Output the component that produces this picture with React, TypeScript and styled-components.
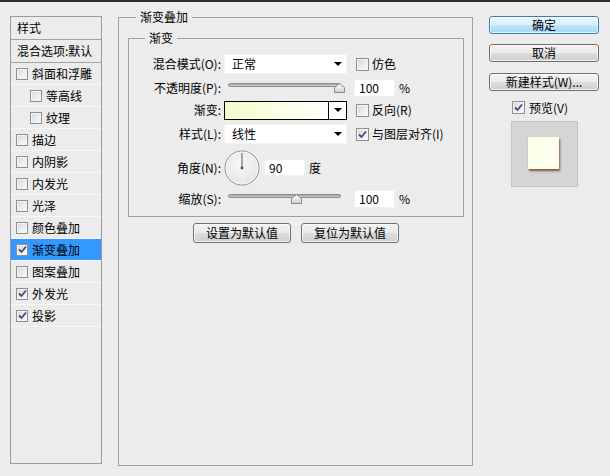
import React from 'react';
import styled, { createGlobalStyle } from 'styled-components';

const GlobalStyle = createGlobalStyle`
  html, body { margin: 0; padding: 0; background: #ececec; }
  body {
    font-family: "Noto Sans CJK SC", "Liberation Sans", sans-serif;
    font-size: 12px;
    color: #000;
  }
  * { box-sizing: border-box; }
`;

const Window = styled.div`
  width: 610px;
  height: 476px;
  background: #ececec;
  display: flex;
  flex-direction: column;
  overflow: hidden;
`;

const TopBar = styled.div`
  height: 2px;
  flex: none;
  background: #2e2e2e;
`;

const Main = styled.div`
  display: flex;
  align-items: flex-start;
  padding-left: 10px;
`;

/* ---------- left list ---------- */
const StyleList = styled.div`
  margin-top: 14px;
  width: 92px;
  height: 448px;
  border: 1px solid #9c9c9c;
  display: flex;
  flex-direction: column;
`;

const ListHeader = styled.div`
  height: 23px;
  flex: none;
  border-bottom: 1px solid #a3a3a3;
  padding-left: 6px;
  display: flex;
  align-items: center;
  white-space: nowrap;
  line-height: 14px;
`;

const ListItem = styled.div<{ $indent?: boolean; $active?: boolean }>`
  height: 22px;
  flex: none;
  border-bottom: 1px solid #f7f7f7;
  display: flex;
  align-items: center;
  gap: 4px;
  padding-left: ${(p) => (p.$indent ? 19 : 5)}px;
  background: ${(p) => (p.$active ? '#3399ff' : 'transparent')};
  white-space: nowrap;
  line-height: 14px;
`;

/* ---------- checkbox ---------- */
const Box = styled.span<{ $size?: number }>`
  width: ${(p) => p.$size ?? 12}px;
  height: ${(p) => p.$size ?? 12}px;
  flex: none;
  border: 1px solid #8e8f8f;
  background: linear-gradient(135deg, #d6d6d6 0%, #ececec 55%, #fbfbfb 100%);
  box-shadow: inset 0 0 0 1px #f4f4f4;
  display: inline-flex;
  align-items: center;
  justify-content: center;
`;

const CheckBox: React.FC<{ checked?: boolean; size?: number }> = ({ checked, size }) => (
  <Box $size={size}>
    {checked && (
      <svg width="9" height="9" viewBox="0 0 9 9">
        <path d="M1 4.5 L3.5 7 L8 1.5" fill="none" stroke="#3b4d85" strokeWidth="1.8" />
      </svg>
    )}
  </Box>
);

/* ---------- group boxes ---------- */
const OuterGroup = styled.fieldset`
  margin: 8px 0 0 16px;
  padding: 0 8px 0 9px;
  width: 355px;
  height: 456px;
  border: 1px solid #a0a0a0;
  min-width: 0;
  display: block;
`;

const Legend = styled.legend<{ $offset: number }>`
  margin-left: ${(p) => p.$offset}px;
  padding: 0 4px;
  line-height: 14px;
  font-size: 12px;
`;

const InnerGroup = styled.fieldset`
  margin: 7px 0 0 0;
  padding: 9px 0 0 0;
  width: 336px;
  height: 186px;
  border: 1px solid #a0a0a0;
  min-width: 0;
  display: block;
`;

const Rows = styled.div`
  display: flex;
  flex-direction: column;
`;

const Row = styled.div<{ $h: number; $mt?: number }>`
  height: ${(p) => p.$h}px;
  margin-top: ${(p) => p.$mt ?? 0}px;
  display: flex;
  align-items: center;
`;

const Label = styled.div`
  width: 92px;
  flex: none;
  text-align: right;
  white-space: nowrap;
  line-height: 14px;
  margin-right: 3px;
`;

const Extra = styled.div`
  margin-left: 7px;
  display: flex;
  align-items: center;
  gap: 4px;
  white-space: nowrap;
  line-height: 14px;
`;

const CheckLabel = styled.label`
  display: flex;
  align-items: center;
  gap: 3px;
  margin-left: 2px;
  white-space: nowrap;
  line-height: 14px;
`;

/* ---------- select ---------- */
const Select = styled.div`
  width: 123px;
  height: 20px;
  background: #fff;
  border: 1px solid #f2f2f2;
  display: flex;
  align-items: center;
  justify-content: space-between;
  padding: 0 4px 0 7px;
  line-height: 14px;
`;

const Arrow = styled.span`
  width: 0;
  height: 0;
  border-left: 4px solid transparent;
  border-right: 4px solid transparent;
  border-top: 4px solid #000;
`;

/* ---------- gradient picker ---------- */
const GradientPicker = styled.div`
  width: 123px;
  height: 19px;
  border: 1px solid #000;
  display: flex;
`;

const GradientFill = styled.div`
  flex: 1;
  background: linear-gradient(to right, #f3fbc9, #fbffe6 55%, #fffffb);
  border-right: 1px solid #000;
`;

const GradientArrow = styled.div`
  width: 17px;
  background: #fff;
  display: flex;
  align-items: center;
  justify-content: center;
`;

/* ---------- slider ---------- */
const SliderWrap = styled.div<{ $mt: number }>`
  width: 123px;
  padding-left: 4px;
  align-self: flex-start;
  margin-top: ${(p) => p.$mt}px;
`;

const Track = styled.div`
  position: relative;
  width: 113px;
  height: 4px;
  border-radius: 2px;
  border: 1px solid #8d8d8d;
  background: linear-gradient(#9c9c9c, #d8d8d8);
`;

const Thumb = styled.svg`
  position: absolute;
  top: -1px;
`;

const Slider: React.FC<{ pos: number; mt: number }> = ({ pos, mt }) => (
  <SliderWrap $mt={mt}>
    <Track>
      <Thumb width="11" height="10" viewBox="0 0 11 10" style={{ left: pos - 5 }}>
        <defs>
          <linearGradient id="tg" x1="0" y1="0" x2="0" y2="1">
            <stop offset="0" stopColor="#fdfdfd" />
            <stop offset="1" stopColor="#d2d2d2" />
          </linearGradient>
        </defs>
        <path d="M0.5 9.5 V4.5 L5.5 0.5 L10.5 4.5 V9.5 Z" fill="url(#tg)" stroke="#8a8a8a" />
      </Thumb>
    </Track>
  </SliderWrap>
);

/* ---------- number input ---------- */
const NumInput = styled.div<{ $w?: number; $h?: number }>`
  width: ${(p) => p.$w ?? 41}px;
  height: ${(p) => p.$h ?? 18}px;
  background: #fff;
  border: 1px solid #f0f0f0;
  padding-left: 4px;
  display: flex;
  align-items: center;
  font-size: 12px;
  line-height: 14px;
`;

/* ---------- angle dial ---------- */
const AngleGroup = styled.div`
  display: flex;
  align-items: center;
  gap: 4px;
  line-height: 14px;
`;

const Dial = () => (
  <svg width="36" height="36" viewBox="0 0 36 36">
    <defs>
      <radialGradient id="dg" cx="0.45" cy="0.4" r="0.7">
        <stop offset="0" stopColor="#f8f8f8" />
        <stop offset="1" stopColor="#e2e2e2" />
      </radialGradient>
    </defs>
    <circle cx="18" cy="18" r="17" fill="url(#dg)" stroke="#8f8f8f" />
    <circle cx="18" cy="18" r="16" fill="none" stroke="#fafafa" strokeWidth="0.8" />
    <line x1="18" y1="3" x2="18" y2="18" stroke="#5a5a5a" strokeWidth="1" />
    <circle cx="18" cy="18" r="1.4" fill="#4a4a4a" />
  </svg>
);

/* ---------- buttons ---------- */
const Button = styled.button<{ $w?: number; $h?: number; $primary?: boolean }>`
  width: ${(p) => p.$w ?? 110}px;
  height: ${(p) => p.$h ?? 18}px;
  padding: 0;
  font-family: inherit;
  font-size: 12px;
  line-height: 14px;
  color: #000;
  border-radius: 3px;
  border: 1px solid ${(p) => (p.$primary ? '#3c7fb1' : '#707070')};
  background: ${(p) =>
    p.$primary
      ? 'linear-gradient(#eaf6fd 0%, #d9f0fc 50%, #bee6fd 51%, #a7d9f5 100%)'
      : 'linear-gradient(#f2f2f2 0%, #ebebeb 50%, #dddddd 51%, #cfcfcf 100%)'};
  box-shadow: inset 0 0 0 1px ${(p) => (p.$primary ? 'rgba(255,255,255,0.6)' : 'rgba(255,255,255,0.7)')};
  white-space: nowrap;
`;

const ButtonBar = styled.div`
  margin-top: 6px;
  display: flex;
  justify-content: center;
  gap: 10px;
`;

/* ---------- right column ---------- */
const RightCol = styled.div`
  margin: 14px 0 0 16px;
  width: 110px;
  display: flex;
  flex-direction: column;
  align-items: center;
`;

const Gap = styled.div<{ $h: number }>`
  height: ${(p) => p.$h}px;
  flex: none;
`;

const PreviewRow = styled.div`
  display: flex;
  align-items: center;
  gap: 4px;
  line-height: 14px;
  height: 13px;
  margin-right: 8px;
`;

const Swatch = styled.div`
  width: 67px;
  height: 66px;
  background: #d5d5d5;
  border: 1px solid #c4c4c4;
  display: flex;
  align-items: center;
  justify-content: center;
`;

const SwatchInner = styled.div`
  width: 31px;
  height: 32px;
  background: linear-gradient(135deg, #fbfde6, #fffff4);
  box-shadow: 1px 2px 2px rgba(120, 62, 30, 0.85);
  margin: -2px 0 0 -2px;
`;

const listItems: { text: string; checked?: boolean; indent?: boolean; active?: boolean }[] = [
  { text: '斜面和浮雕' },
  { text: '等高线', indent: true },
  { text: '纹理', indent: true },
  { text: '描边' },
  { text: '内阴影' },
  { text: '内发光' },
  { text: '光泽' },
  { text: '颜色叠加' },
  { text: '渐变叠加', checked: true, active: true },
  { text: '图案叠加' },
  { text: '外发光', checked: true },
  { text: '投影', checked: true },
];

export default function App() {
  return (
    <Window>
      <GlobalStyle />
      <TopBar />
      <Main>
        <StyleList>
          <ListHeader>样式</ListHeader>
          <ListHeader>混合选项:默认</ListHeader>
          {listItems.map((it) => (
            <ListItem key={it.text} $indent={it.indent} $active={it.active}>
              <CheckBox checked={it.checked} />
              <span>{it.text}</span>
            </ListItem>
          ))}
        </StyleList>

        <OuterGroup>
          <Legend $offset={8}>渐变叠加</Legend>
          <InnerGroup>
            <Legend $offset={16}>渐变</Legend>
            <Rows>
              <Row $h={20}>
                <Label>混合模式(O):</Label>
                <Select>
                  <span>正常</span>
                  <Arrow />
                </Select>
                <Extra>
                  <CheckLabel>
                    <CheckBox size={13} />
                    仿色
                  </CheckLabel>
                </Extra>
              </Row>
              <Row $h={21} $mt={3}>
                <Label>不透明度(P):</Label>
                <Slider pos={110} mt={6} />
                <Extra>
                  <NumInput>100</NumInput>
                  <span>%</span>
                </Extra>
              </Row>
              <Row $h={20} $mt={2}>
                <Label>渐变:</Label>
                <GradientPicker>
                  <GradientFill />
                  <GradientArrow>
                    <Arrow />
                  </GradientArrow>
                </GradientPicker>
                <Extra>
                  <CheckLabel>
                    <CheckBox size={13} />
                    反向(R)
                  </CheckLabel>
                </Extra>
              </Row>
              <Row $h={20} $mt={4}>
                <Label>样式(L):</Label>
                <Select>
                  <span>线性</span>
                  <Arrow />
                </Select>
                <Extra>
                  <CheckLabel>
                    <CheckBox size={13} checked />
                    与图层对齐(I)
                  </CheckLabel>
                </Extra>
              </Row>
              <Row $h={35} $mt={6}>
                <Label>角度(N):</Label>
                <AngleGroup>
                  <Dial />
                  <NumInput $w={41} $h={17}>90</NumInput>
                  <span>度</span>
                </AngleGroup>
              </Row>
              <Row $h={18} $mt={5}>
                <Label>缩放(S):</Label>
                <Slider pos={67} mt={4} />
                <Extra>
                  <NumInput>100</NumInput>
                  <span>%</span>
                </Extra>
              </Row>
            </Rows>
          </InnerGroup>
          <ButtonBar>
            <Button $w={98} $h={20}>设置为默认值</Button>
            <Button $w={98} $h={20}>复位为默认值</Button>
          </ButtonBar>
        </OuterGroup>

        <RightCol>
          <Button $primary>确定</Button>
          <Gap $h={10} />
          <Button>取消</Button>
          <Gap $h={11} />
          <Button>新建样式(W)...</Button>
          <Gap $h={10} />
          <PreviewRow>
            <CheckBox size={13} checked />
            <span>预览(V)</span>
          </PreviewRow>
          <Gap $h={7} />
          <Swatch>
            <SwatchInner />
          </Swatch>
        </RightCol>
      </Main>
    </Window>
  );
}
